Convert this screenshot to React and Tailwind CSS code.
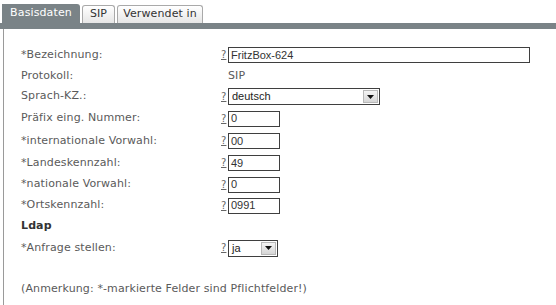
import React from "react";

function Q() {
  return (
    <span className="w-[7px] text-[10px] leading-none text-[#666] underline font-['DejaVu_Sans',sans-serif]">?</span>
  );
}

function TextInput({ value, w }) {
  return (
    <div className={`${w} h-[16px] border border-[#3f3f3f] bg-white flex items-center pl-[2px] font-['Liberation_Sans',Arial,sans-serif] text-[11px] tracking-normal text-[#333]`}>
      {value}
    </div>
  );
}

function Select({ value, w }) {
  return (
    <div className={`${w} h-[17px] border border-[#3f3f3f] bg-white flex items-center justify-between pl-[3px] pr-[1px] font-['Liberation_Sans',Arial,sans-serif] text-[11px] tracking-normal text-[#222]`}>
      <span>{value}</span>
      <span className="w-[15px] h-[13px] border border-[#b8b8b8] bg-gradient-to-b from-[#f4f4f4] to-[#d6d6d6] flex items-center justify-center">
        <svg width="7" height="4" viewBox="0 0 7 4"><path d="M0 0h7L3.5 4z" fill="#111" /></svg>
      </span>
    </div>
  );
}

function Row({ h, label, children, bold }) {
  return (
    <div className={`flex items-center ${h}`}>
      <div className={`w-[200px] ${bold ? "font-bold text-[#333]" : ""}`}>{label}</div>
      {children}
    </div>
  );
}

export default function App() {
  return (
    <div className="w-[556px] h-[305px] bg-white pt-[4px] font-['DejaVu_Sans',Verdana,sans-serif] text-[11px] tracking-[0.12px] text-[#5a5a5a] overflow-hidden">
      <div className="flex items-end gap-[2px] pl-[2px] h-[19px]">
        <div className="w-[78px] h-[19px] bg-[#7a8387] text-white rounded-tr-[3px] flex items-center justify-center">Basisdaten</div>
        <div className="w-[33px] h-[18px] border border-b-0 border-[#a9a9a9] rounded-t-[3px] bg-gradient-to-b from-white to-[#e6e6e6] text-[#333] flex items-center justify-center">SIP</div>
        <div className="w-[86px] h-[18px] border border-b-0 border-[#a9a9a9] rounded-t-[3px] bg-gradient-to-b from-white to-[#e6e6e6] text-[#333] flex items-center justify-center">Verwendet in</div>
      </div>
      <div className="h-[6px] bg-[#7a8387]" />
      <div className="ml-[3px] border-l border-[#9a9a9a] h-[276px] pl-[17px] pt-[15px]">
        <Row h="h-[22px]" label="*Bezeichnung:">
          <Q />
          <TextInput value="FritzBox-624" w="w-[302px]" />
        </Row>
        <Row h="h-[20px]" label="Protokoll:">
          <span className="pl-[7px]">SIP</span>
        </Row>
        <Row h="h-[21px]" label="Sprach-KZ.:">
          <Q />
          <Select value="deutsch" w="w-[152px]" />
        </Row>
        <Row h="h-[23px]" label="Präfix eing. Nummer:">
          <Q />
          <TextInput value="0" w="w-[52px]" />
        </Row>
        <Row h="h-[22px]" label="*internationale Vorwahl:">
          <Q />
          <TextInput value="00" w="w-[52px]" />
        </Row>
        <Row h="h-[22px]" label="*Landeskennzahl:">
          <Q />
          <TextInput value="49" w="w-[52px]" />
        </Row>
        <Row h="h-[21px]" label="*nationale Vorwahl:">
          <Q />
          <TextInput value="0" w="w-[52px]" />
        </Row>
        <Row h="h-[21px]" label="*Ortskennzahl:">
          <Q />
          <TextInput value="0991" w="w-[52px]" />
        </Row>
        <Row h="h-[21px]" label="Ldap" bold />
        <Row h="h-[22px]" label="*Anfrage stellen:">
          <Q />
          <Select value="ja" w="w-[50px]" />
        </Row>
        <div className="mt-[22px] h-[16px] flex items-center">(Anmerkung: *-markierte Felder sind Pflichtfelder!)</div>
      </div>
    </div>
  );
}
